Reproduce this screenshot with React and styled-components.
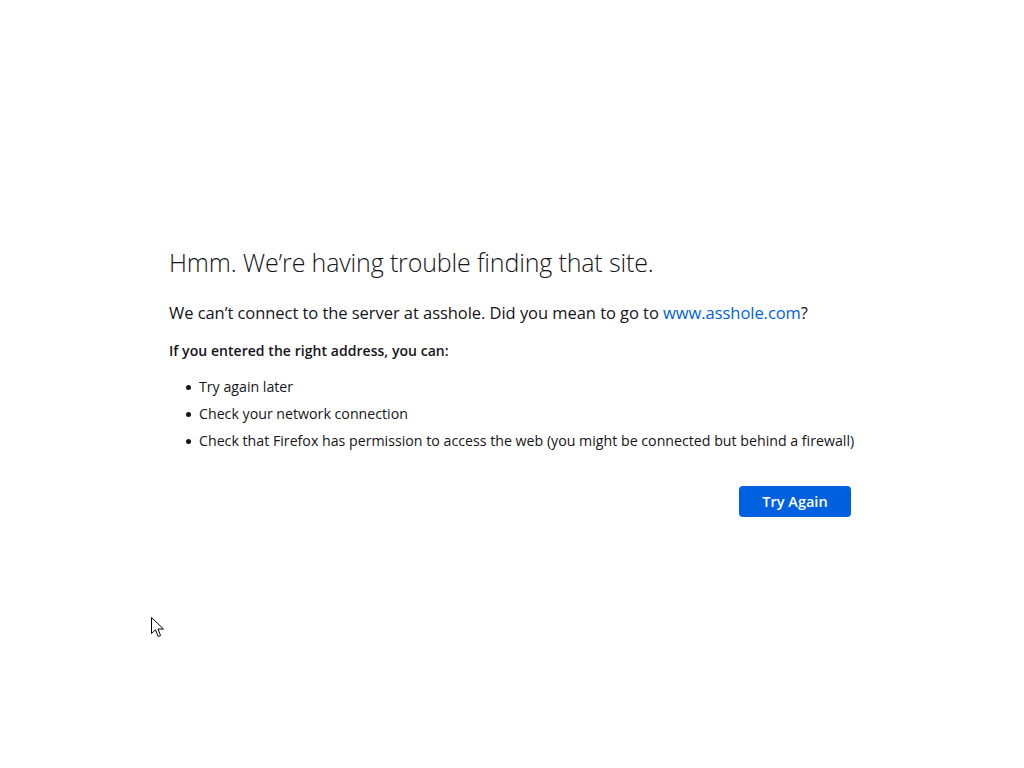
import React from "react";
import styled, { createGlobalStyle } from "styled-components";

const Global = createGlobalStyle`
  html, body {
    margin: 0;
    padding: 0;
    background: #fff;
  }
  body {
    font-family: "Open Sans", "Noto Sans", sans-serif;
    color: #15141a;
  }
`;

const Page = styled.main`
  position: relative;
  width: 1024px;
  height: 768px;
  display: flex;
  align-items: center;
  justify-content: center;
`;

const Container = styled.div`
  width: 682px;
  display: flex;
  flex-direction: column;
  margin: -2px 4px 0 0;
`;

const Title = styled.h1`
  margin: 0 0 26px;
  font-size: 25px;
  font-weight: 300;
  line-height: 26px;
  letter-spacing: -0.15px;
  color: #15141a;
`;

const Lead = styled.p`
  margin: 0 0 15px;
  font-size: 16.5px;
  line-height: 24px;
  letter-spacing: -0.05px;
`;

const Link = styled.a`
  color: #0061e0;
  text-decoration: none;
`;

const Subhead = styled.p`
  margin: 0 0 11px;
  font-size: 14px;
  font-weight: 600;
  line-height: 22px;
  letter-spacing: 0.05px;
`;

const List = styled.ul`
  margin: 0;
  padding: 0 0 0 30px;
  list-style: none;
`;

const Item = styled.li`
  position: relative;
  font-size: 14.2px;
  line-height: 27px;
  letter-spacing: 0;
  white-space: nowrap;

  &::before {
    content: "";
    position: absolute;
    left: -13px;
    top: 12px;
    width: 5px;
    height: 5px;
    border-radius: 50%;
    background: #15141a;
  }
`;

const Actions = styled.div`
  display: flex;
  justify-content: flex-end;
  margin-top: 32px;
`;

const Button = styled.button`
  width: 112px;
  height: 31px;
  border: none;
  border-radius: 4px;
  background: #0061e0;
  color: #fff;
  font-family: inherit;
  font-size: 14.5px;
  font-weight: 600;
  cursor: pointer;
`;

const Cursor = styled.svg`
  position: absolute;
  left: 151px;
  top: 617px;
`;

export default function App() {
  return (
    <>
      <Global />
      <Page>
        <Container>
          <Title>Hmm. We’re having trouble finding that site.</Title>
          <Lead>
            We can’t connect to the server at asshole. Did you mean to go to{" "}
            <Link href="#">www.asshole.com</Link>?
          </Lead>
          <Subhead>If you entered the right address, you can:</Subhead>
          <List>
            <Item>Try again later</Item>
            <Item>Check your network connection</Item>
            <Item>
              Check that Firefox has permission to access the web (you might be
              connected but behind a firewall)
            </Item>
          </List>
          <Actions>
            <Button>Try Again</Button>
          </Actions>
        </Container>
        <Cursor width="14" height="21" viewBox="0 0 14 21">
          <path
            d="M0.5 0.5 L0.5 16.5 L4.5 12.8 L7.2 19.5 L9.6 18.5 L7 12 L12.5 12 Z"
            fill="#fff"
            stroke="#000"
            strokeWidth="1"
            strokeLinejoin="miter"
          />
        </Cursor>
      </Page>
    </>
  );
}
